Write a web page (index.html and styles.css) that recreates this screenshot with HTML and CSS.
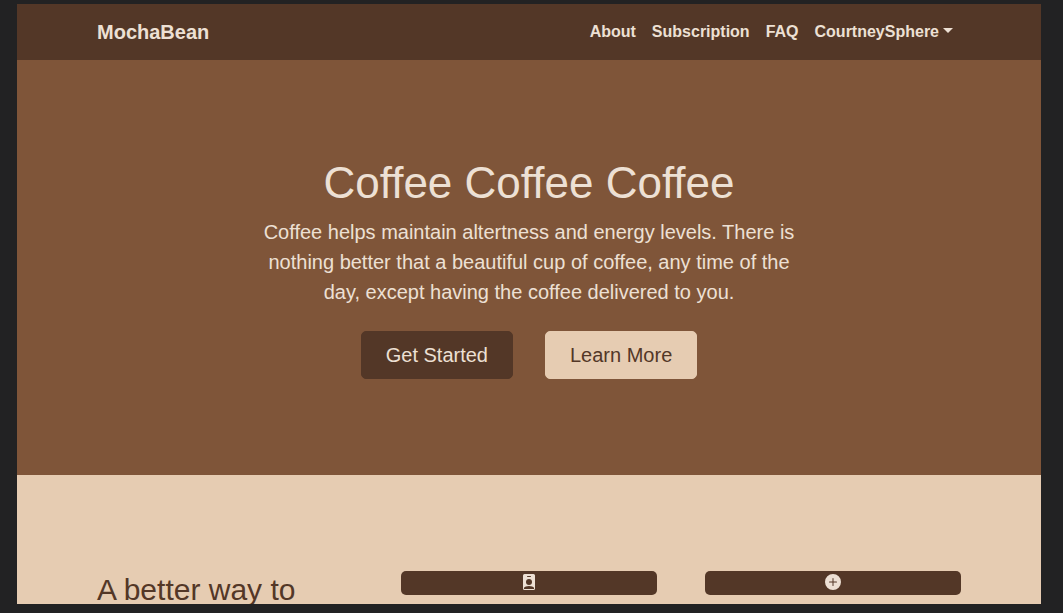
FILE: index.html
```html
<!DOCTYPE html>
<html lang="en">
<head>
  <meta charset="utf-8">
  <meta name="viewport" content="width=device-width, initial-scale=1">
  <title>MochaBean</title>
  <link rel="stylesheet" href="styles.css">
</head>
<body>
  <div class="page">
    <header class="navbar">
      <a class="brand" href="#">MochaBean</a>
      <nav class="nav">
        <a class="nav-link" href="#about">About</a>
        <a class="nav-link" href="#subscription">Subscription</a>
        <a class="nav-link" href="#faq">FAQ</a>
        <button class="nav-link nav-toggle" type="button" aria-haspopup="true">CourtneySphere<span class="caret"></span></button>
      </nav>
    </header>
    <main>
      <section class="hero">
        <h1 class="hero-title">Coffee Coffee Coffee</h1>
        <p class="hero-lead">Coffee helps maintain altertness and energy levels. There is nothing better that a beautiful cup of coffee, any time of the day, except having the coffee delivered to you.</p>
        <div class="hero-actions">
          <button class="btn btn-dark" type="button">Get Started</button>
          <button class="btn btn-light" type="button">Learn More</button>
        </div>
      </section>
      <section class="features" id="about">
        <h2 class="features-title">A better way to</h2>
        <div class="feature">
          <svg class="icon" viewBox="0 0 16 16" aria-hidden="true"><path d="M3.500 0h9a1.500 1.500 0 0 1 1.500 1.500v13a1.500 1.500 0 0 1-1.500 1.500h-9a1.500 1.500 0 0 1-1.500-1.500v-13A1.500 1.500 0 0 1 3.500 0z"/><g class="icon-cutout"><rect x="6" y="2" width="4" height="1" rx=".5"/><circle cx="8" cy="8" r="3"/><path d="M3 15v-1.200C3.900 12.700 5.400 12 8 12s4.100.7 5 1.800V15z"/></g></svg>
        </div>
        <div class="feature">
          <svg class="icon" viewBox="0 0 16 16" aria-hidden="true"><path d="M16 8A8 8 0 1 1 0 8a8 8 0 0 1 16 0zM8.500 4.500a.5.5 0 0 0-1 0v3h-3a.5.5 0 0 0 0 1h3v3a.5.5 0 0 0 1 0v-3h3a.5.5 0 0 0 0-1h-3v-3z"/></svg>
        </div>
      </section>
    </main>
  </div>
</body>
</html>
```

FILE: styles.css
```css
:root {
  --espresso: #533727;
  --mocha: #7f5539;
  --latte: #e6ccb2;
  --foam: #ede0d4;
}

* {
  box-sizing: border-box;
}

body {
  margin: 0;
  height: 100vh;
  padding: 4px 22px 9px 17px;
  overflow: hidden;
  background: #222223;
  color: var(--foam);
  font-family: Arial, "Liberation Sans", sans-serif;
  font-size: 16px;
  line-height: 24px;
}

.page {
  height: 100%;
  overflow: hidden;
  background: var(--latte);
}

.navbar {
  display: flex;
  align-items: center;
  justify-content: space-between;
  padding: 8px 80px;
  background: var(--espresso);
}

.brand {
  color: var(--foam);
  font-size: 20px;
  font-weight: 700;
  line-height: 30px;
  text-decoration: none;
}

.nav {
  display: flex;
}

.nav-link {
  padding: 8px;
  color: var(--foam);
  font: inherit;
  font-weight: 700;
  text-decoration: none;
}

.nav-toggle {
  display: flex;
  align-items: center;
  gap: 4px;
  border: 0;
  background: none;
}

.caret {
  border: 5px solid transparent;
  border-top: 5px solid var(--foam);
  border-bottom: 0;
  margin-bottom: 3px;
}

.hero {
  display: flex;
  flex-direction: column;
  align-items: center;
  padding: 96px 80px;
  background: var(--mocha);
  text-align: center;
}

.hero-title {
  margin: 0 0 8px;
  font-size: 44px;
  font-weight: 400;
  line-height: 53px;
}

.hero-lead {
  max-width: 560px;
  margin: 0 0 24px;
  font-size: 20px;
  line-height: 30px;
}

.hero-actions {
  display: flex;
  gap: 32px;
}

.btn {
  padding: 8px 24px;
  border: 1px solid transparent;
  border-radius: 5px;
  font: inherit;
  font-size: 20px;
  line-height: 30px;
}

.btn-dark {
  border-color: var(--espresso);
  background: var(--espresso);
  color: var(--foam);
}

.btn-light {
  border-color: var(--latte);
  background: var(--latte);
  color: var(--espresso);
}

.features {
  display: grid;
  grid-template-columns: repeat(3, 1fr);
  align-items: start;
  gap: 48px;
  padding: 96px 80px;
  color: var(--espresso);
}

.features-title {
  margin: 0;
  font-size: 30px;
  font-weight: 400;
  line-height: 38px;
}

.feature {
  display: flex;
  justify-content: center;
  padding: 3px 0 5px;
  border-radius: 5px;
  background: var(--espresso);
  color: var(--foam);
}

.icon {
  width: 16px;
  height: 16px;
  fill: currentColor;
}

.icon-cutout {
  fill: var(--espresso);
}
```
